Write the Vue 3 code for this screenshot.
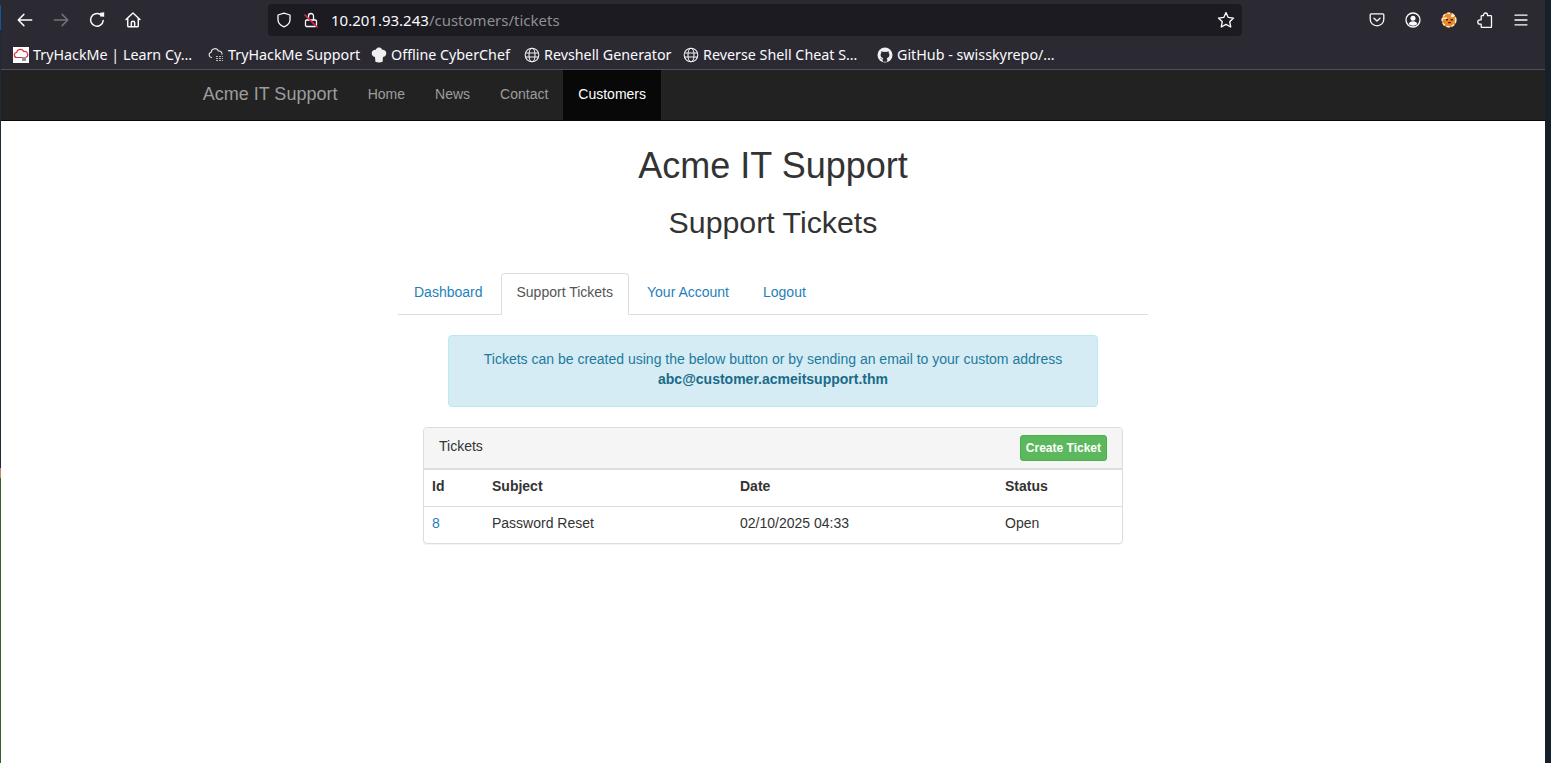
<template>
  <div class="screen">
    <div class="edge-left"></div>
    <div class="window">
      <!-- browser chrome -->
      <div class="toolbar">
        <div class="tool-btn" v-for="icon in leftTools" :key="icon.name">
          <svg width="18" height="18" viewBox="0 0 16 16" fill="none" :stroke="icon.color" stroke-width="1.3" stroke-linecap="round" stroke-linejoin="round">
            <path :d="icon.d" />
            <path v-if="icon.name === 'reload'" d="M10.8 1.6 14.4 1.2V5L10.8 4.9z" fill="#fbfbfe" stroke="none" />
          </svg>
        </div>
        <div class="urlbar">
          <svg class="shield" width="16" height="16" viewBox="0 0 16 16" fill="none" stroke="#fbfbfe" stroke-width="1.3" stroke-linejoin="round">
            <path d="M8 1.2 14 3v4.6c0 3.4-2.6 6-6 7.2-3.4-1.2-6-3.800-6-7.200V3z" />
          </svg>
          <svg class="lock" width="16" height="16" viewBox="0 0 16 16" fill="none" stroke-width="1.3" stroke-linecap="round">
            <rect x="2.500" y="8" width="11" height="6.500" rx="1.2" stroke="#fbfbfe" />
            <path d="M5.500 8V4a2.500 2.500 0 0 1 5 0v4" stroke="#fbfbfe" />
            <path d="M2 3 14 15" stroke="#e22850" stroke-width="1.6" />
          </svg>
          <span class="url"><span class="host">10.201.93.243</span>/customers/tickets</span>
          <svg class="star" width="18" height="18" viewBox="0 0 16 16" fill="none" stroke="#fbfbfe" stroke-width="1.2" stroke-linejoin="round">
            <path d="m8 1.400 2 4.300 4.700.6-3.400 3.200.9 4.700L8 11.900l-4.200 2.300.9-4.700-3.400-3.200 4.700-.6z" />
          </svg>
        </div>
        <div class="tool-right">
          <div class="tool-btn">
            <svg width="16" height="16" viewBox="0 0 16 16" fill="none" stroke="#fbfbfe" stroke-width="1.3" stroke-linecap="round" stroke-linejoin="round">
              <path d="M2.200 1.800h11.600c.6 0 1 .4 1 1v4.400c0 3.600-3 6.600-6.800 6.600s-6.800-3-6.800-6.600V2.800c0-.6.400-1 1-1z" />
              <path d="M5 6.200 8 9l3-2.800" />
            </svg>
          </div>
          <div class="tool-btn">
            <svg width="16" height="16" viewBox="0 0 16 16" fill="none">
              <circle cx="8" cy="8" r="7" stroke="#fbfbfe" stroke-width="1.3" />
              <circle cx="8" cy="6.200" r="2.500" fill="#fbfbfe" />
              <path d="M3.800 12c.4-2 2-2.800 4.200-2.800s3.800.8 4.200 2.800c-1 1-2.500 1.700-4.200 1.700S4.800 13 3.800 12z" fill="#fbfbfe" />
            </svg>
          </div>
          <div class="tool-btn">
            <svg width="16" height="16" viewBox="0 0 16 16">
              <circle cx="8" cy="8" r="7.500" fill="#ee8a26" />
              <circle cx="8" cy="8" r="6.800" fill="none" stroke="#f3f0ee" stroke-width="1.400" stroke-dasharray="3 2" />
              <path d="M2 5.500h4v1.500H2zM10 3h3v2h-3z" fill="#f7efe6" />
              <path d="M5 7h2v1.500H5zM9.500 7H12v1.500H9.500zM7 10h3v1.200H7z" fill="#33261c" />
            </svg>
          </div>
          <div class="tool-btn">
            <svg width="16" height="16" viewBox="0 0 16 16" fill="none" stroke="#fbfbfe" stroke-width="1.3" stroke-linejoin="round">
              <path d="M6.500 3.700V3a2 2 0 0 1 4 0v.7h3.200c.4 0 .8.400.8.800v10.300c0 .4-.4.700-.8.700H5c-.4 0-.8-.3-.8-.7v-2.600H3a2.200 2.200 0 0 1 0-4.400h1.200V4.500c0-.4.400-.8.800-.8z" />
            </svg>
          </div>
          <div class="tool-btn">
            <svg width="16" height="16" viewBox="0 0 16 16" fill="none" stroke="#fbfbfe" stroke-width="1.3" stroke-linecap="round">
              <path d="M2 3.200h12M2 8h12M2 12.800h12" />
            </svg>
          </div>
        </div>
      </div>

      <div class="bookmarks">
        <div class="bookmark" v-for="b in bookmarks" :key="b.label" :style="{ width: b.width + 'px' }">
          <svg v-if="b.icon === 'thm'" width="16" height="16" viewBox="0 0 16 16">
            <rect width="16" height="16" fill="#fff" />
            <path d="M4 10.500a2.500 2.500 0 0 1-.3-5A3.700 3.700 0 0 1 10.700 4.500 3 3 0 0 1 12.500 10.500z" fill="none" stroke="#d9323f" stroke-width="1.200" />
            <rect x="9" y="10" width="4" height="4" fill="#9a8f95" />
          </svg>
          <svg v-else-if="b.icon === 'cloud'" width="16" height="16" viewBox="0 0 16 16" fill="none" stroke="#e8e8ec" stroke-width="1.100">
            <path d="M4 10.500H3.500a2.700 2.700 0 0 1-.3-5.300A3.800 3.800 0 0 1 10.500 4a3 3 0 0 1 3.500 3.500" />
            <path d="M8 9.500h7M8 11.500h7M8 13.500h7" stroke="#b5b5ba" stroke-dasharray="2 1" />
          </svg>
          <svg v-else-if="b.icon === 'chef'" width="16" height="16" viewBox="0 0 16 16" fill="#efefef">
            <path d="M4 10C1.600 9.400.4 7.600.8 5.400 1.300 3.300 3.100 2.400 4.700 2.700 5.500 1.200 6.800.6 8 .6s2.500.6 3.300 2.100c1.600-.3 3.400.6 3.900 2.700.4 2.200-.8 4-3.200 4.600l-.4 4.800c-2 .8-5.200.8-7.200 0z" />
          </svg>
          <svg v-else-if="b.icon === 'globe'" width="16" height="16" viewBox="0 0 16 16" fill="none" stroke="#f0f0f4" stroke-width="1.100">
            <circle cx="8" cy="8" r="6.800" />
            <ellipse cx="8" cy="8" rx="3" ry="6.800" />
            <path d="M1.200 6h13.600M1.200 10h13.600" />
          </svg>
          <svg v-else width="16" height="16" viewBox="0 0 16 16">
            <circle cx="8" cy="8" r="7.500" fill="#f0f0f4" />
            <path d="M5.700 14.800v-2.600c-1.500.3-2-.5-2.400-1.300.8.100 1.300.7 1.600 1 .3.200.7.200 1 0 0-.4.100-.7.400-1-1.700-.3-2.700-1.200-2.700-3 0-.8.300-1.400.7-1.900-.1-.5-.1-1.100.1-1.700.7 0 1.300.3 1.900.7a6.500 6.500 0 0 1 3.400 0c.6-.4 1.200-.7 1.900-.7.200.6.200 1.200.1 1.700.4.500.7 1.100.7 1.900 0 1.800-1 2.700-2.700 3 .3.300.5.800.5 1.300v2.600z" fill="#2b2a33" />
          </svg>
          <span>{{ b.label }}</span>
        </div>
      </div>

      <!-- site navbar -->
      <nav class="navbar">
        <a class="brand">Acme IT Support</a>
        <a v-for="item in navItems" :key="item" class="nav-link" :class="{ active: item === 'Customers' }">{{ item }}</a>
      </nav>

      <!-- page -->
      <main class="page">
        <h1>Acme IT Support</h1>
        <h2>Support Tickets</h2>

        <ul class="tabs">
          <li v-for="tab in tabs" :key="tab" :class="{ current: tab === 'Support Tickets' }">{{ tab }}</li>
        </ul>

        <div class="alert">
          <div>Tickets can be created using the below button or by sending an email to your custom address</div>
          <strong>abc@customer.acmeitsupport.thm</strong>
        </div>

        <div class="panel">
          <div class="panel-heading">
            <span class="panel-title">Tickets</span>
            <a class="btn-create">Create Ticket</a>
          </div>
          <table class="tickets">
            <colgroup>
              <col class="col-id" />
              <col class="col-subject" />
              <col class="col-date" />
              <col />
            </colgroup>
            <thead>
              <tr>
                <th>Id</th>
                <th>Subject</th>
                <th>Date</th>
                <th>Status</th>
              </tr>
            </thead>
            <tbody>
              <tr v-for="t in tickets" :key="t.id">
                <td><a class="ticket-link">{{ t.id }}</a></td>
                <td>{{ t.subject }}</td>
                <td>{{ t.date }}</td>
                <td>{{ t.status }}</td>
              </tr>
            </tbody>
          </table>
        </div>
      </main>
    </div>
    <div class="edge-right"></div>
  </div>
</template>

<script setup>
const leftTools = [
  { name: 'back', color: '#fbfbfe', d: 'M14 8H2.500M7 3 2 8l5 5' },
  { name: 'forward', color: '#73737a', d: 'M2 8h11.500M9 3l5 5-5 5' },
  { name: 'reload', color: '#fbfbfe', d: 'M13.500 8.500A5.600 5.600 0 1 1 11.200 3.300' },
  { name: 'home', color: '#fbfbfe', d: 'M1.800 7.500 8 1.800l6.200 5.700M3.300 6.500V13c0 .6.400 1 1 1h7.400c.6 0 1-.4 1-1V6.500M6.500 14v-3.500c0-.8.600-1.300 1.500-1.300s1.500.5 1.500 1.300V14' }
]

const bookmarks = [
  { label: 'TryHackMe | Learn Cy…', icon: 'thm', width: 195 },
  { label: 'TryHackMe Support', icon: 'cloud', width: 163 },
  { label: 'Offline CyberChef', icon: 'chef', width: 153 },
  { label: 'Revshell Generator', icon: 'globe', width: 159 },
  { label: 'Reverse Shell Cheat S…', icon: 'globe', width: 194 },
  { label: 'GitHub - swisskyrepo/…', icon: 'github', width: 190 }
]

const navItems = ['Home', 'News', 'Contact', 'Customers']
const tabs = ['Dashboard', 'Support Tickets', 'Your Account', 'Logout']

const tickets = [
  { id: 8, subject: 'Password Reset', date: '02/10/2025 04:33', status: 'Open' }
]
</script>

<style>
html, body {
  margin: 0;
  background: #fff;
  overflow: hidden;
}
</style>

<style scoped>
.screen {
  display: flex;
  width: 1551px;
  height: 763px;
  overflow: hidden;
  font-family: "Liberation Sans", Arial, sans-serif;
  font-size: 14px;
  line-height: 20px;
  color: #333;
}

.edge-left {
  width: 1px;
  flex-shrink: 0;
  background: linear-gradient(to bottom, #2b2a33 0, #2b2a33 5px, #0b5a9e 5px, #0b5a9e 30px, #1e2a38 30px, #1e2a38 468px, #c08a60 468px, #c08a60 478px, #3a5f2a 478px, #3a5f2a 100%);
}

.edge-right {
  width: 6px;
  background: #14202a;
  flex-shrink: 0;
}

.window {
  flex: 1;
  min-width: 0;
  background: #fff;
}

.toolbar {
  display: flex;
  align-items: flex-start;
  height: 36px;
  padding-left: 6px;
  padding-top: 4px;
  box-sizing: border-box;
  background: #2b2a33;
}

.tool-btn {
  width: 36px;
  height: 32px;
  display: flex;
  align-items: center;
  justify-content: center;
  flex-shrink: 0;
}

.tool-right {
  display: flex;
  margin-left: 117px;
}

.urlbar {
  display: flex;
  align-items: center;
  width: 974px;
  height: 32px;
  margin-left: 117px;
  flex-shrink: 0;
  background: #1c1b22;
  border-radius: 4px;
  box-sizing: border-box;
  padding-left: 8px;
  font-family: "Noto Sans", sans-serif;
}

.lock {
  margin-left: 11px;
}

.url {
  margin-left: 12px;
  font-size: 15px;
  color: #8f8f94;
  white-space: nowrap;
}

.host {
  color: #fbfbfe;
}

.star {
  margin-left: auto;
  margin-right: 7px;
}

.bookmarks {
  display: flex;
  align-items: center;
  height: 34px;
  box-sizing: border-box;
  padding: 4px 0 0 12px;
  background: #2b2a33;
  border-bottom: 1px solid #52525e;
  font-family: "Noto Sans", sans-serif;
  font-size: 14.3px;
  color: #fbfbfe;
}

.bookmark {
  display: flex;
  align-items: center;
  gap: 4px;
  white-space: nowrap;
  flex-shrink: 0;
}

.navbar {
  display: flex;
  height: 51px;
  box-sizing: border-box;
  padding-left: 201.7px;
  background: #222;
  border-bottom: 1px solid #080808;
  align-items: stretch;
}

.brand {
  width: 150px;
  padding-top: 14px;
  box-sizing: border-box;
  font-size: 18px;
  color: #9d9d9d;
  white-space: nowrap;
}

.nav-link {
  padding: 14px 15px 16px;
  color: #9d9d9d;
}

.nav-link.active {
  color: #fff;
  background: #080808;
}

.page {
  text-align: center;
  padding-top: 25px;
}

h1 {
  margin: 0 0 20px;
  font-size: 36px;
  font-weight: 500;
  line-height: 1.1;
}

h2 {
  margin: 0 0 34px;
  font-size: 30.3px;
  font-weight: 500;
  line-height: 33px;
}

.tabs {
  display: flex;
  width: 750px;
  height: 42px;
  margin: 0 auto 20px;
  padding: 0;
  box-sizing: border-box;
  list-style: none;
  border-bottom: 1px solid #ddd;
}

.tabs li {
  height: 42px;
  margin-right: 2px;
  padding: 8px 15px 0;
  box-sizing: border-box;
  border: 1px solid transparent;
  border-radius: 4px 4px 0 0;
  color: #1f7fba;
}

.tabs li.current {
  color: #555;
  background: #fff;
  border-color: #ddd #ddd #fff;
}

.alert {
  width: 650px;
  height: 72px;
  margin: 0 auto 20px;
  padding: 13px 15px;
  box-sizing: border-box;
  background: #d5ecf5;
  border: 1px solid #bce8f1;
  border-radius: 4px;
  color: #1d7a9c;
}

.alert strong {
  font-weight: 700;
  color: #1a6a88;
}

.panel {
  width: 700px;
  margin: 0 auto;
  box-sizing: border-box;
  border: 1px solid #ddd;
  border-radius: 4px;
  background: #fff;
  text-align: left;
  box-shadow: 0 1px 1px rgba(0, 0, 0, 0.05);
}

.panel-heading {
  display: flex;
  justify-content: space-between;
  align-items: flex-start;
  height: 42px;
  box-sizing: border-box;
  padding: 7px 15px 0;
  background: #f5f5f5;
  border-bottom: 2px solid #ddd;
  border-radius: 3px 3px 0 0;
}

.panel-title {
  margin-top: 1px;
}

.btn-create {
  height: 26px;
  padding: 0 5px;
  box-sizing: border-box;
  line-height: 24px;
  font-size: 12px;
  font-weight: 700;
  color: #fff;
  background: #5cb85c;
  border: 1px solid #4cae4c;
  border-radius: 3px;
}

.tickets {
  width: 100%;
  table-layout: fixed;
  border-collapse: separate;
  border-spacing: 0;
}

.col-id {
  width: 60px;
}

.col-subject {
  width: 248px;
}

.col-date {
  width: 265px;
}

.tickets th,
.tickets td {
  padding: 6px 8px 10px;
  text-align: left;
  line-height: 20px;
}

.tickets th {
  font-weight: 700;
  border-bottom: 1px solid #ddd;
}

.ticket-link {
  color: #1f7fba;
}
</style>
